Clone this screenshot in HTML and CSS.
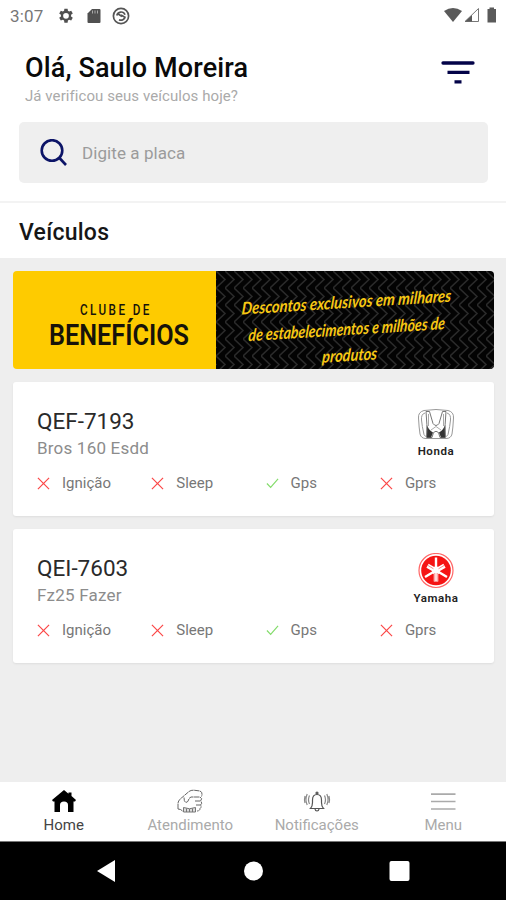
FILE: index.html
```html
<!DOCTYPE html>
<html lang="pt-BR">
<head>
<meta charset="utf-8">
<title>Veículos</title>
<link rel="stylesheet" href="styles.css">
</head>
<body>
<svg class="defs" width="0" height="0" aria-hidden="true">
  <symbol id="cross" viewBox="0 0 14 14"><path d="M1 1l12 12M13 1L1 13" fill="none" stroke="#fb4747" stroke-width="1.3"/></symbol>
  <symbol id="check" viewBox="0 0 14 14"><path d="M1 7l4 4.200L13 2" fill="none" stroke="#84dc6c" stroke-width="1.3"/></symbol>
</svg>
<div class="statusbar">
  <span class="time">3:07</span>
  <svg class="st-gear" width="16" height="16" viewBox="0 0 24 24"><path fill="#505050" fill-rule="evenodd" d="M9.600 1h4.800l.5 3.300 1.800 1 3.100-1.200 2.400 4.100-2.600 2.100v2.400l2.600 2.100-2.400 4.100-3.100-1.200-1.800 1-.5 3.300H9.600l-.5-3.300-1.800-1-3.100 1.200-2.400-4.100 2.600-2.100v-2.400L1.800 8.200l2.400-4.100 3.100 1.200 1.800-1zM12 7.500a4.300 4.300 0 1 0 0 8.600 4.300 4.300 0 0 0 0-8.600z"/></svg>
  <svg class="st-sd" width="14" height="16" viewBox="0 0 14 16"><path fill="#505050" d="M5 1h7.500q1 0 1 1v12q0 1-1 1h-11q-1 0-1-1V5.500z"/><path d="M5.500 2.500v3M8 2.500v3M10.500 2.500v3" stroke="#aaa"/></svg>
  <svg class="st-sync" width="18" height="18" viewBox="0 0 18 18" fill="none" stroke="#555" stroke-width="1.700"><circle cx="9" cy="9" r="7.600"/><path d="M4.800 8.500a4.300 4.300 0 0 1 8.200-.8M13.200 9.500a4.300 4.300 0 0 1-6.200 3.200M5.500 6.500L10 9.500M9 8l3.500 2"/></svg>
  <span class="grow"></span>
  <svg width="54" height="18" viewBox="0 0 54 18"><path fill="#5a5a5a" d="M0 4Q9-2 18 4L9 15z"/><path d="M21 14.500L34.500 1.500v13z" fill="none" stroke="#777"/><path d="M21 14.500L28 8v6.500z" fill="#5a5a5a"/><path fill="#5a5a5a" d="M43.500 2h2V.5h4.500V2h2v13.500h-8.500z"/></svg>
</div>
<header class="header">
  <div class="hello">
    <h1>Olá, Saulo Moreira</h1>
    <p>Já verificou seus veículos hoje?</p>
  </div>
  <svg class="filter" width="34" height="24" viewBox="0 0 34 24" fill="none" stroke="#030348" stroke-width="3.300"><path stroke-linecap="round" d="M2 2h30"/><path d="M6.500 11.400h22M13.500 20.800h7"/></svg>
</header>
<div class="search">
  <svg width="28" height="28" viewBox="0 0 28 28" fill="none" stroke="#0c1467" stroke-width="2.600"><circle cx="12" cy="11.500" r="10.300"/><path d="M19 18.500L26 26"/></svg>
  <span>Digite a placa</span>
</div>
<div class="section"><h2>Veículos</h2></div>
<main class="content">
  <svg class="banner" width="481" height="98" viewBox="0 0 481 98">
    <defs>
      <pattern id="zigzag" width="9" height="17" patternUnits="userSpaceOnUse" x="203" y="0"><path d="M-9 0l9 8.500-9 8.500M0 0l9 8.500L0 17" fill="none" stroke="#2b2b2b" stroke-width="1.500"/></pattern>
    </defs>
    <rect width="204" height="98" fill="#fecb00"/>
    <rect x="203" width="278" height="98" fill="#030303"/>
    <rect x="203" width="278" height="98" fill="url(#zigzag)"/>
    <g class="club" fill="#17130a">
      <text class="club-small" transform="translate(67 44) scale(.78 1)" x="0" y="0" textLength="89">CLUBE DE</text>
      <text class="club-big" x="36" y="74" textLength="140" lengthAdjust="spacingAndGlyphs">BENEFÍCIOS</text>
    </g>
    <g class="script" fill="#f8c813" transform="rotate(-3.500 335 50) skewX(-8)">
      <text x="234" y="37" textLength="210" lengthAdjust="spacingAndGlyphs">Descontos exclusivos em milhares</text>
      <text x="243" y="64" textLength="197" lengthAdjust="spacingAndGlyphs">de estabelecimentos e milhões de</text>
      <text x="319" y="90" textLength="55" lengthAdjust="spacingAndGlyphs">produtos</text>
    </g>
  </svg>
  <article class="card">
    <div class="top">
      <div class="vehicle"><h3>QEF-7193</h3><p>Bros 160 Esdd</p></div>
      <div class="brand">
        <svg width="36" height="36" viewBox="0 0 36 36" fill="none" stroke="#999"><path d="M6 4.500Q18 2.500 30 4.500Q36 6 35.500 12Q35 22 34 28Q33 32.500 28 32.500H8Q3 32.500 2 28Q1 22 .5 12Q0 6 6 4.500z"/><path d="M7 7Q3 8 3.500 14T6 28.500Q7 31 10 31M29 7Q33 8 32.500 14T30 28.500Q29 31 26 31"/><path fill="#fff" stroke="#777" d="M8 5.500h3.500l3.500 12q3 4 6 0l3.500-12H28Q26.500 18 27.500 31.500h-5.500l-1.500-5q-2.500-2.500-5 0L14 31.500H8.500Q9.500 18 8 5.500z"/><path fill="#333" stroke="none" d="M9.200 19q1 5 5.800 7.500L13 31.500H9zM26.800 19q-1 5-5.800 7.500l2 5h4z"/><path stroke="#aaa" d="M10.500 8v12M25.500 8v12M13 24l5-3.500 5 3.500"/></svg>
        <b>Honda</b>
      </div>
    </div>
    <div class="status">
      <span><svg><use href="#cross"/></svg>Ignição</span><span><svg><use href="#cross"/></svg>Sleep</span><span><svg><use href="#check"/></svg>Gps</span><span><svg><use href="#cross"/></svg>Gprs</span>
    </div>
  </article>
  <article class="card">
    <div class="top">
      <div class="vehicle"><h3>QEI-7603</h3><p>Fz25 Fazer</p></div>
      <div class="brand">
        <svg width="36" height="36" viewBox="0 0 36 36"><circle cx="18" cy="17.500" r="17" fill="#fff" stroke="#f66" stroke-width="1.200"/><circle cx="18" cy="17.500" r="14.800" fill="#f51414"/><g stroke="#fff" stroke-width="2.400" fill="none"><path d="M18 4.500v16M7 24L22 15M29 24L14 15"/><path stroke-width="4.500" d="M18 19.500v9M16 16.500L9.500 12.800M20 16.500l6.500-3.700"/></g><circle cx="18" cy="17.500" r="4" fill="#fff"/><path stroke="#f66" stroke-width=".8" d="M16.800 20v8M19.200 20v8M10 12.500l5.500 3.300M26 12.500l-5.500 3.300"/></svg>
        <b>Yamaha</b>
      </div>
    </div>
    <div class="status">
      <span><svg><use href="#cross"/></svg>Ignição</span><span><svg><use href="#cross"/></svg>Sleep</span><span><svg><use href="#check"/></svg>Gps</span><span><svg><use href="#cross"/></svg>Gprs</span>
    </div>
  </article>
</main>
<nav class="tabs">
  <div class="tab active"><svg width="26" height="26" viewBox="0 0 26 26"><path fill="#000" d="M13 2l4.500 3.700V4.500h3v3.600L25 12l-1 1.500h-1.500V24H17v-7q0-3.500-4-3.500T9 17v7H3.500V13.500H2L1 12z"/></svg><span>Home</span></div>
  <div class="tab"><svg width="26" height="26" viewBox="0 0 26 26" fill="none" stroke="#666"><path d="M1 21V15Q1.500 12 5 9.500L12 3.500Q14 2 17 2.200L23 3Q25.500 4 25 7l-.5 1.500M7 9.500Q7 14 9 14.500Q11.500 14 12 10.500L14 9H23M23 9q3 1.500.5 4q2.500 2 0 4q1.500 2-.5 3.500q0 2.500-3 2.500M1 21q3 0 5 2.500M18 13h5.500M19 17h4.500" stroke-dasharray="5 .5"/><path fill="#ddd" stroke="#777" d="M6.500 19.500q6 2.500 12 0v4.500h-12zM9.500 20.500V24M12.500 21V24M15.500 20.500V24"/></svg><span>Atendimento</span></div>
  <div class="tab"><svg width="28" height="26" viewBox="0 0 28 26" fill="none" stroke="#555" stroke-width="1.200"><path d="M14 4.500v1.800M7.500 20.500q2-2 2-6V12q0-5.500 4.500-5.500T18.500 12v2.500q0 4 2 6zM12 21q.3 2 2 2t2-2"/><circle cx="14" cy="5" r="1"/><path stroke="#888" d="M6.500 7.500q-2 4 0 8.500M4.200 6q-2.500 5.500 0 11M2 8q-1 4 0 7M21.500 7.500q2 4 0 8.500M23.800 6q2.500 5.500 0 11M26 8q1 4 0 7"/></svg><span>Notificações</span></div>
  <div class="tab"><svg width="26" height="26" viewBox="0 0 26 26" stroke="#aaa" stroke-width="1.700"><path d="M1 6.200h24.500M1 13.500h24.500M1 21h24.500"/></svg><span>Menu</span></div>
</nav>
<footer class="android">
  <svg width="506" height="58" viewBox="0 0 506 58" fill="#fff"><path d="M97 29l18-11v22z"/><circle cx="253.500" cy="29" r="9.500"/><rect x="389.500" y="19" width="20" height="20" rx="2"/></svg>
</footer>
</body>
</html>
```
FILE: styles.css
```css
* { box-sizing: border-box; margin: 0; padding: 0; }
body { width: 506px; height: 900px; display: flex; flex-direction: column; background: #fff; font-family: Roboto, "Liberation Sans", sans-serif; overflow: hidden; }
svg { display: block; flex: none; }
.defs { position: absolute; }
.statusbar { height: 32px; display: flex; align-items: center; padding: 0 8px 0 10px; }
.time { width: 48px; font-size: 17px; letter-spacing: .2px; color: #777; }
.st-sd { margin-left: 13px; }
.st-sync { margin-left: 11px; }
.grow { flex: 1; }
.header { height: 90px; display: flex; justify-content: space-between; padding: 20px 31px 0 25px; }
h1 { font-weight: 500; font-size: 27px; line-height: 32px; letter-spacing: .13px; color: #0a0a0a; }
.header p { font-size: 15px; line-height: 24px; letter-spacing: .07px; color: #aaa; }
.filter { margin-top: 9px; }
.search { height: 61px; margin: 0 18px 0 19px; padding-left: 21px; display: flex; align-items: center; gap: 14px; background: #efefef; border-radius: 5px; font-size: 17px; letter-spacing: .08px; color: #9b9b9b; }
.section { height: 57px; margin-top: 18px; border-top: 2px solid #f3f3f3; padding: 14px 19px 0; }
h2 { font-weight: 500; font-size: 23px; line-height: 31px; letter-spacing: .25px; color: #161616; }
.content { flex: 1; background: #eee; padding: 13px 12px 0 13px; display: flex; flex-direction: column; }
.banner { border-radius: 4px; margin-bottom: 13px; }
.club { font-family: Roboto, sans-serif; }
.club-small { font-size: 15px; font-weight: 500; }
.club-big { font-size: 29px; font-weight: 600; }
.script { font-family: Lato, sans-serif; font-style: italic; font-weight: 700; font-size: 17px; }
.card { height: 134px; margin-bottom: 13px; background: #fff; border-radius: 3px; box-shadow: 0 1px 2px #ddd; padding: 24px; }
.top { height: 63px; display: flex; justify-content: space-between; }
h3 { font-weight: 400; font-size: 22.500px; line-height: 30px; color: #2a2a2a; }
.vehicle p { font-size: 17px; line-height: 24px; letter-spacing: .2px; color: #8c8c8c; }
.brand { width: 68px; display: flex; flex-direction: column; align-items: center; color: #222; }
.brand b { font-size: 11.500px; line-height: 18px; font-weight: 600; letter-spacing: .6px; }
.status { display: grid; grid-template-columns: repeat(4, 114.300px); font-size: 15px; color: #777; }
.status span { height: 28px; display: flex; align-items: center; gap: 12px; }
.status svg { width: 13px; height: 13px; }
.tabs { height: 60px; background: #fff; border-bottom: 1px solid #777; display: grid; grid-template-columns: repeat(4, 1fr); }
.tab { display: flex; flex-direction: column; align-items: center; padding: 6px 0 0 1px; font-size: 15px; line-height: 22px; color: #aaa; }
.active { color: #444; }
.android { height: 58px; background: #000; }
```
